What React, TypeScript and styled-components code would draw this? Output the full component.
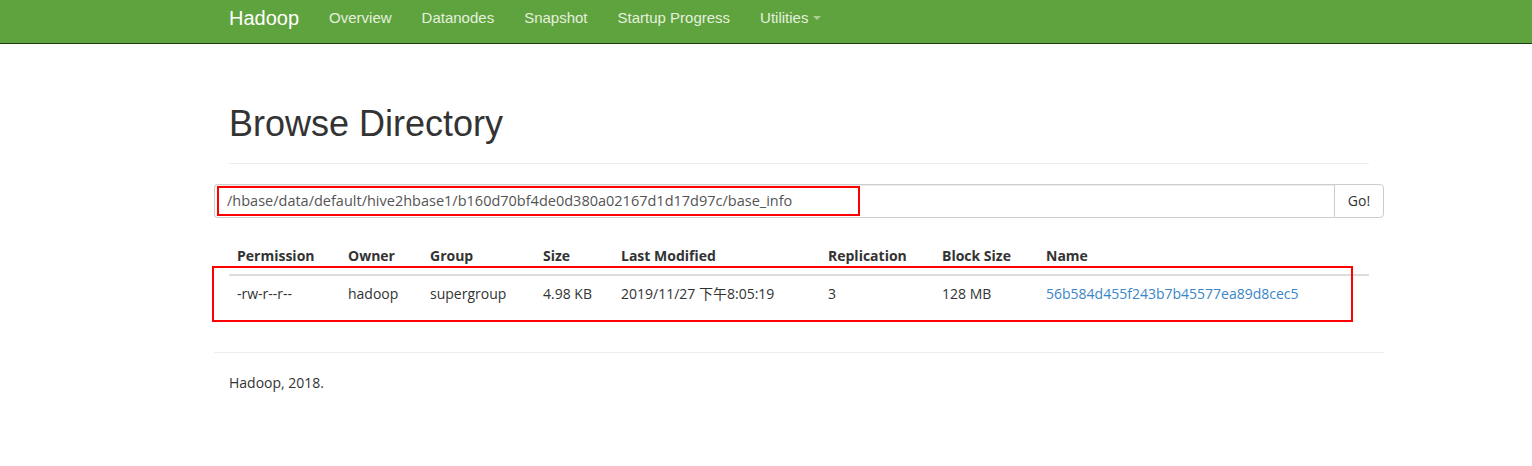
import styled, { createGlobalStyle } from 'styled-components';

const GlobalStyle = createGlobalStyle`
  *, *::before, *::after {
    box-sizing: border-box;
  }
  html, body {
    margin: 0;
    padding: 0;
    background: #fff;
  }
  body {
    font-family: "Open Sans", "Noto Sans CJK SC", sans-serif;
    font-size: 14px;
    color: #333;
  }
`;

const Navbar = styled.nav`
  background: #5fa33e;
  height: 44px;
  border-bottom: 1px solid #1f3a12;
`;

const Container = styled.div`
  position: relative;
  width: 1170px;
  margin-left: 214px;
`;

const NavInner = styled(Container)`
  display: flex;
  align-items: flex-start;
  padding-top: 8px;
`;

const Brand = styled.a`
  font-family: "Liberation Sans", Arial, sans-serif;
  font-size: 20px;
  line-height: 20px;
  color: #fff;
  padding: 0 15px;
  text-decoration: none;
`;

const NavLink = styled.a`
  font-family: "Liberation Sans", Arial, sans-serif;
  font-size: 15px;
  line-height: 20px;
  color: #e6f0df;
  padding: 0 15px;
  text-decoration: none;
  display: flex;
  align-items: center;
`;

const Caret = styled.span`
  display: inline-block;
  margin-left: 5px;
  border-top: 4px solid #a9cf95;
  border-left: 4px solid transparent;
  border-right: 4px solid transparent;
`;

const Main = styled(Container)`
  padding-top: 20px;
`;

const PageHeader = styled.div`
  margin: 40px 15px 20px;
  padding-bottom: 9px;
  border-bottom: 1px solid #eee;
`;

const Title = styled.h1`
  font-family: "Liberation Sans", Arial, sans-serif;
  font-size: 36px;
  font-weight: 400;
  margin: 20px 0 10px;
  line-height: 1.1;
  color: #333;
`;

const InputGroup = styled.div`
  display: flex;
  height: 34px;
`;

const PathInput = styled.div`
  flex: 1;
  border: 1px solid #ccc;
  border-right: none;
  border-radius: 4px 0 0 4px;
  box-shadow: inset 0 1px 1px rgba(0, 0, 0, 0.075);
  padding: 0 12px;
  display: flex;
  align-items: center;
  color: #555;
  font-size: 14.5px;
`;

const GoButton = styled.button`
  width: 50px;
  border: 1px solid #ccc;
  border-radius: 0 4px 4px 0;
  background: #fff;
  font-family: "Open Sans", sans-serif;
  font-size: 14px;
  color: #333;
  padding: 0;
`;

const Table = styled.table`
  width: 1140px;
  margin: 20px 15px 0;
  border-collapse: collapse;
  table-layout: fixed;
`;

const Th = styled.th<{ w: number }>`
  width: ${({ w }) => w}px;
  text-align: left;
  font-weight: 700;
  padding: 8px;
  line-height: 20px;
  border-bottom: 2px solid #ddd;
  color: #333;
`;

const Td = styled.td`
  padding: 8px;
  line-height: 20px;
  color: #333;
`;

const NameLink = styled.a`
  color: #3a86c8;
  text-decoration: none;
`;

const Footer = styled.div`
  margin-top: 40px;
  border-top: 1px solid #eee;
  padding: 20px 15px;
`;

const FooterText = styled.p`
  margin: 0;
  line-height: 20px;
`;

const Mark = styled.div`
  position: absolute;
  border: 2px solid #f00;
  pointer-events: none;
`;

const columns = [
  { label: 'Permission', w: 111 },
  { label: 'Owner', w: 82 },
  { label: 'Group', w: 113 },
  { label: 'Size', w: 78 },
  { label: 'Last Modified', w: 207 },
  { label: 'Replication', w: 114 },
  { label: 'Block Size', w: 104 },
  { label: 'Name', w: 331 },
];

const navItems = ['Overview', 'Datanodes', 'Snapshot', 'Startup Progress'];

function App() {
  return (
    <>
      <GlobalStyle />
      <Navbar>
        <NavInner>
          <Brand>Hadoop</Brand>
          {navItems.map((item) => (
            <NavLink key={item}>{item}</NavLink>
          ))}
          <NavLink>
            Utilities
            <Caret />
          </NavLink>
        </NavInner>
      </Navbar>

      <Main>
        <PageHeader>
          <Title>Browse Directory</Title>
        </PageHeader>

        <InputGroup>
          <PathInput>/hbase/data/default/hive2hbase1/b160d70bf4de0d380a02167d1d17d97c/base_info</PathInput>
          <GoButton>Go!</GoButton>
        </InputGroup>

        <Table>
          <thead>
            <tr>
              {columns.map((c) => (
                <Th key={c.label} w={c.w}>
                  {c.label}
                </Th>
              ))}
            </tr>
          </thead>
          <tbody>
            <tr>
              <Td>-rw-r--r--</Td>
              <Td>hadoop</Td>
              <Td>supergroup</Td>
              <Td>4.98 KB</Td>
              <Td>2019/11/27 下午8:05:19</Td>
              <Td>3</Td>
              <Td>128 MB</Td>
              <Td>
                <NameLink>56b584d455f243b7b45577ea89d8cec5</NameLink>
              </Td>
            </tr>
          </tbody>
        </Table>

        <Footer>
          <FooterText>Hadoop, 2018.</FooterText>
        </Footer>

        <Mark style={{ left: 3, top: 142, width: 643, height: 30 }} />
        <Mark style={{ left: -2, top: 222, width: 1141, height: 56 }} />
      </Main>
    </>
  );
}

export default App;
